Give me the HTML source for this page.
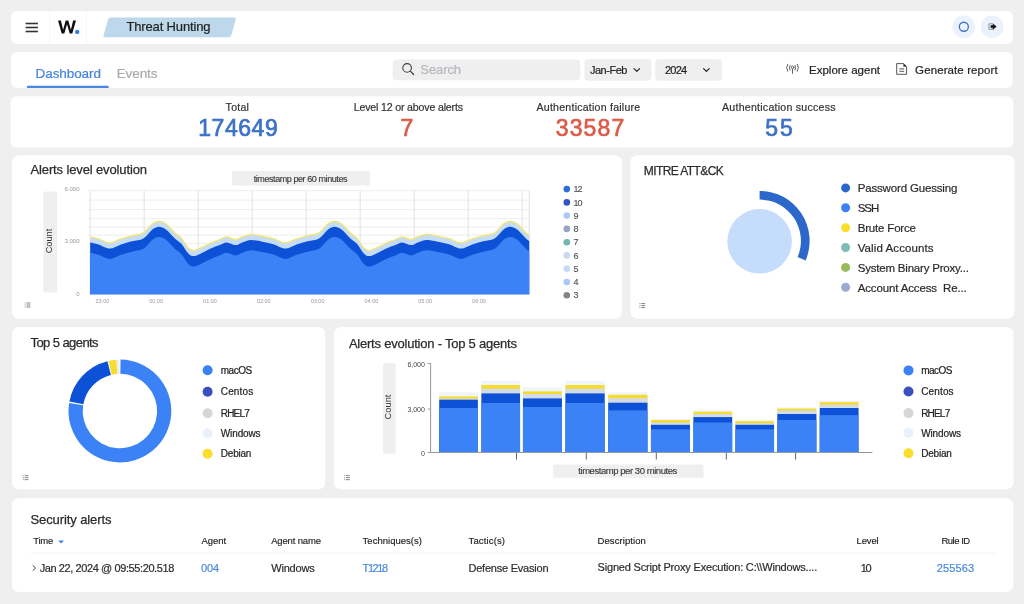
<!DOCTYPE html>
<html lang="en">
<head>
<meta charset="utf-8">
<title>Threat Hunting</title>
<style>
html,body{margin:0;padding:0;}
body{width:1024px;height:604px;overflow:hidden;position:relative;background:#efefef;font-family:"Liberation Sans",sans-serif;}
svg.bg{position:absolute;left:0;top:0;}
#txt{position:absolute;left:0;top:0;width:1024px;height:604px;will-change:transform;transform:translateZ(0);}
.t{position:absolute;white-space:pre;line-height:1;font-family:"Liberation Sans",sans-serif;}
</style>
</head>
<body>
<svg class="bg" width="1024" height="604" viewBox="0 0 1024 604">
<rect x="11" y="11" width="1002" height="33" rx="6" fill="#fff"/>
<rect x="11" y="52" width="1001.8" height="36" rx="6" fill="#fff"/>
<rect x="10.6" y="96.2" width="1002.8" height="51.2" rx="6" fill="#fff"/>
<rect x="12" y="155.2" width="609.8" height="163.5" rx="7" fill="#fff"/>
<rect x="630.3" y="155.2" width="384.2" height="163.5" rx="7" fill="#fff"/>
<rect x="12" y="327" width="313.3" height="162.3" rx="7" fill="#fff"/>
<rect x="334" y="327" width="679.5" height="162.3" rx="7" fill="#fff"/>
<rect x="12" y="498.3" width="1001.2" height="93.8" rx="7" fill="#fff"/>
<rect x="25.6" y="22.7" width="12.3" height="1.6" fill="#333"/>
<rect x="25.6" y="26.7" width="12.3" height="1.6" fill="#333"/>
<rect x="25.6" y="30.7" width="12.3" height="1.6" fill="#333"/>
<rect x="49.2" y="11" width="0.8" height="33" fill="#f4f4f4"/>
<rect x="86.2" y="11" width="0.8" height="33" fill="#f4f4f4"/>
<path transform="translate(58 20.6)" d="M0 0 H2.9 L5.1 9.2 L7.7 0 H10.3 L12.9 9.2 L15.1 0 H18 L14.3 12.9 H11.7 L9 3.6 L6.3 12.9 H3.7 Z" fill="#111"/>
<circle cx="77.2" cy="31.9" r="2.2" fill="#3a7cf0"/>
<path d="M110.3 17.5 H234.5 Q236.3 17.5 235.8 19.2 L231.2 35.6 Q230.7 37.2 229 37.2 H104.8 Q103 37.2 103.5 35.5 L108.2 19 Q108.7 17.5 110.3 17.5 Z" fill="#bcd8ea"/>
<circle cx="963.8" cy="26.7" r="11.3" fill="#ebf2fd"/>
<circle cx="963.85" cy="26.75" r="4.5" fill="none" stroke="#3b73c9" stroke-width="1.3"/>
<circle cx="992.1" cy="26.7" r="11.3" fill="#ebf2fd"/>
<path d="M993 23.8 H988.9 V29.3 H993.4" fill="none" stroke="#8a8a8a" stroke-width="0.9"/>
<path d="M990.9 25.5 H993.1 V23.9 L996.3 26.6 L993.1 29.3 V27.7 H990.9 Z" fill="#111" stroke="#111" stroke-width="0.5" stroke-linejoin="round"/>
<rect x="26.8" y="85.8" width="82" height="2.2" rx="1" fill="#4a86e4"/>
<rect x="392.6" y="59.4" width="187.6" height="20.8" rx="4" fill="#efefef"/>
<circle cx="407.1" cy="67.9" r="4.3" fill="none" stroke="#3c3c3c" stroke-width="1.1"/>
<path d="M410.3 71.1 L413.6 74.5" stroke="#3c3c3c" stroke-width="1.2" stroke-linecap="round"/>
<rect x="584.4" y="59.3" width="67" height="21.4" rx="4" fill="#efefef"/>
<rect x="655.2" y="59.3" width="66.8" height="21.4" rx="4" fill="#efefef"/>
<path d="M634 68.6 L636.8 71.4 L639.6 68.6" fill="none" stroke="#222" stroke-width="1.2" stroke-linecap="round" stroke-linejoin="round"/>
<path d="M703.6 68.6 L706.4 71.4 L709.2 68.6" fill="none" stroke="#222" stroke-width="1.2" stroke-linecap="round" stroke-linejoin="round"/>
<g fill="none" stroke="#5a5a5a" stroke-width="0.95" stroke-linecap="round"><circle cx="792.5" cy="67.4" r="1.35"/><path d="M792.5 69 V73.4"/><path d="M790 65.4 Q788.5 67.7 790 70.1"/><path d="M795 65.4 Q796.5 67.7 795 70.1"/><path d="M787.7 64.2 Q785.3 67.7 787.7 71.3"/><path d="M797.3 64.2 Q799.7 67.7 797.3 71.3"/></g>
<path d="M896.7 63.6 H903.6 L906.6 66.6 V74.3 H896.7 Z" fill="none" stroke="#444" stroke-width="0.9" stroke-linejoin="round"/>
<path d="M903.4 63.6 L906.6 66.8 H903.4 Z" fill="#333"/>
<path d="M899.3 68.9 H904.1 M899.3 71.3 H904.1" stroke="#444" stroke-width="0.9"/>
<rect x="232" y="171.1" width="138.2" height="14.3" rx="1.5" fill="#efefef"/>
<rect x="43.4" y="191.4" width="13.8" height="101.1" rx="1.5" fill="#efefef"/>
<path d="M88.4 190.70 H529.2 M88.4 200.10 H529.2 M88.4 209.60 H529.2 M88.4 218.70 H529.2 M88.4 226.90 H529.2 M88.4 235.10 H529.2 M88.4 243.60 H529.2 M88.4 252.10 H529.2 M88.4 260.60 H529.2" stroke="#e9e9e9" stroke-width="0.8" fill="none"/>
<path d="M90.20 190.7 V294.3 M144.20 190.7 V294.3 M198.20 190.7 V294.3 M252.20 190.7 V294.3 M306.20 190.7 V294.3 M360.20 190.7 V294.3 M414.20 190.7 V294.3 M468.20 190.7 V294.3 M522.20 190.7 V294.3 M529.20 190.7 V294.3" stroke="#dcdcdc" stroke-width="0.8" fill="none"/>
<path d="M90.2 236.9 C91.6 237.3 95.2 237.9 98.5 238.9 C101.8 239.9 106.0 243.0 109.7 243.0 C113.5 243.0 117.3 240.1 121.0 238.9 C124.7 237.7 128.3 236.8 132.0 235.8 C135.7 234.8 140.0 234.9 143.4 232.9 C146.8 230.9 149.8 225.8 152.4 223.9 C155.0 222.0 156.8 221.2 159.0 221.2 C161.2 221.2 163.3 222.0 165.9 223.9 C168.5 225.8 172.2 230.5 174.8 232.9 C177.4 235.3 179.3 236.0 181.6 238.5 C183.8 241.0 186.2 246.1 188.3 248.1 C190.4 250.1 191.8 250.7 194.0 250.6 C196.2 250.5 199.0 248.8 201.8 247.5 C204.6 246.2 207.8 244.3 210.8 243.0 C213.8 241.7 217.2 240.6 219.8 239.6 C222.4 238.6 223.9 236.9 226.5 236.9 C229.1 236.9 232.9 239.6 235.5 239.6 C238.1 239.6 239.6 237.8 242.2 236.9 C244.8 236.0 247.8 234.5 251.2 234.4 C254.6 234.3 260.0 235.8 262.4 236.2 C264.8 236.6 263.7 236.5 265.6 236.9 C267.6 237.3 270.8 237.9 274.1 238.9 C277.4 239.9 281.6 243.0 285.3 243.0 C289.1 243.0 292.9 240.1 296.6 238.9 C300.3 237.7 303.9 236.8 307.6 235.8 C311.3 234.8 315.6 234.9 319.0 232.9 C322.4 230.9 325.4 225.8 328.0 223.9 C330.6 222.0 332.4 221.2 334.6 221.2 C336.9 221.2 338.9 222.0 341.5 223.9 C344.1 225.8 347.8 230.5 350.4 232.9 C353.0 235.3 354.9 236.0 357.2 238.5 C359.4 241.0 361.8 246.1 363.9 248.1 C366.0 250.1 367.4 250.7 369.6 250.6 C371.9 250.5 374.6 248.8 377.4 247.5 C380.2 246.2 383.4 244.3 386.4 243.0 C389.4 241.7 392.8 240.6 395.4 239.6 C398.0 238.6 399.5 236.9 402.1 236.9 C404.7 236.9 408.5 239.6 411.1 239.6 C413.7 239.6 415.2 237.8 417.8 236.9 C420.4 236.0 423.4 234.5 426.8 234.4 C430.2 234.3 435.6 235.8 438.0 236.2 C440.4 236.6 439.2 236.5 441.2 236.9 C443.1 237.3 446.4 237.9 449.7 238.9 C453.0 239.9 457.1 243.0 460.9 243.0 C464.6 243.0 468.5 240.1 472.2 238.9 C475.9 237.7 479.5 236.8 483.2 235.8 C486.9 234.8 491.2 234.9 494.6 232.9 C498.0 230.9 501.0 225.8 503.6 223.9 C506.2 222.0 507.9 221.2 510.2 221.2 C512.5 221.2 514.5 222.0 517.1 223.9 C519.7 225.8 524.0 231.0 526.0 232.9 C528.0 234.8 528.7 235.1 529.2 235.5 L529.2 294.3 L90.2 294.3 Z" fill="#c5dcf8"/>
<path d="M90.2 242.4 C91.6 242.8 95.2 243.4 98.5 244.4 C101.8 245.4 106.0 248.5 109.7 248.5 C113.5 248.5 117.3 245.6 121.0 244.4 C124.7 243.2 128.3 242.3 132.0 241.3 C135.7 240.3 140.0 240.4 143.4 238.4 C146.8 236.4 149.8 231.3 152.4 229.4 C155.0 227.5 156.8 226.7 159.0 226.7 C161.2 226.7 163.3 227.5 165.9 229.4 C168.5 231.3 172.2 236.0 174.8 238.4 C177.4 240.8 179.3 241.5 181.6 244.0 C183.8 246.5 186.2 251.6 188.3 253.6 C190.4 255.6 191.8 256.2 194.0 256.1 C196.2 256.0 199.0 254.3 201.8 253.0 C204.6 251.7 207.8 249.8 210.8 248.5 C213.8 247.2 217.2 246.1 219.8 245.1 C222.4 244.1 223.9 242.4 226.5 242.4 C229.1 242.4 232.9 245.1 235.5 245.1 C238.1 245.1 239.6 243.3 242.2 242.4 C244.8 241.5 247.8 240.0 251.2 239.9 C254.6 239.8 260.0 241.3 262.4 241.7 C264.8 242.1 263.7 242.0 265.6 242.4 C267.6 242.8 270.8 243.4 274.1 244.4 C277.4 245.4 281.6 248.5 285.3 248.5 C289.1 248.5 292.9 245.6 296.6 244.4 C300.3 243.2 303.9 242.3 307.6 241.3 C311.3 240.3 315.6 240.4 319.0 238.4 C322.4 236.4 325.4 231.3 328.0 229.4 C330.6 227.5 332.4 226.7 334.6 226.7 C336.9 226.7 338.9 227.5 341.5 229.4 C344.1 231.3 347.8 236.0 350.4 238.4 C353.0 240.8 354.9 241.5 357.2 244.0 C359.4 246.5 361.8 251.6 363.9 253.6 C366.0 255.6 367.4 256.2 369.6 256.1 C371.9 256.0 374.6 254.3 377.4 253.0 C380.2 251.7 383.4 249.8 386.4 248.5 C389.4 247.2 392.8 246.1 395.4 245.1 C398.0 244.1 399.5 242.4 402.1 242.4 C404.7 242.4 408.5 245.1 411.1 245.1 C413.7 245.1 415.2 243.3 417.8 242.4 C420.4 241.5 423.4 240.0 426.8 239.9 C430.2 239.8 435.6 241.3 438.0 241.7 C440.4 242.1 439.2 242.0 441.2 242.4 C443.1 242.8 446.4 243.4 449.7 244.4 C453.0 245.4 457.1 248.5 460.9 248.5 C464.6 248.5 468.5 245.6 472.2 244.4 C475.9 243.2 479.5 242.3 483.2 241.3 C486.9 240.3 491.2 240.4 494.6 238.4 C498.0 236.4 501.0 231.3 503.6 229.4 C506.2 227.5 507.9 226.7 510.2 226.7 C512.5 226.7 514.5 227.5 517.1 229.4 C519.7 231.3 524.0 236.5 526.0 238.4 C528.0 240.3 528.7 240.6 529.2 241.0 L529.2 294.3 L90.2 294.3 Z" fill="#0d52d6"/>
<path d="M90.2 252.8 C91.6 253.2 95.2 253.8 98.5 254.8 C101.8 255.8 106.0 258.9 109.7 258.9 C113.5 258.9 117.3 256.0 121.0 254.8 C124.7 253.6 128.3 252.7 132.0 251.7 C135.7 250.7 140.0 250.8 143.4 248.8 C146.8 246.8 149.8 241.7 152.4 239.8 C155.0 237.8 156.8 237.1 159.0 237.1 C161.2 237.1 163.3 237.8 165.9 239.8 C168.5 241.7 172.2 246.4 174.8 248.8 C177.4 251.2 179.3 251.9 181.6 254.4 C183.8 256.9 186.2 262.0 188.3 264.0 C190.4 266.0 191.8 266.6 194.0 266.5 C196.2 266.4 199.0 264.7 201.8 263.4 C204.6 262.1 207.8 260.2 210.8 258.9 C213.8 257.6 217.2 256.5 219.8 255.5 C222.4 254.5 223.9 252.8 226.5 252.8 C229.1 252.8 232.9 255.5 235.5 255.5 C238.1 255.5 239.6 253.7 242.2 252.8 C244.8 251.9 247.8 250.4 251.2 250.3 C254.6 250.2 260.0 251.7 262.4 252.1 C264.8 252.5 263.7 252.3 265.6 252.8 C267.6 253.2 270.8 253.8 274.1 254.8 C277.4 255.8 281.6 258.9 285.3 258.9 C289.1 258.9 292.9 256.0 296.6 254.8 C300.3 253.6 303.9 252.7 307.6 251.7 C311.3 250.7 315.6 250.8 319.0 248.8 C322.4 246.8 325.4 241.7 328.0 239.8 C330.6 237.8 332.4 237.1 334.6 237.1 C336.9 237.1 338.9 237.8 341.5 239.8 C344.1 241.7 347.8 246.4 350.4 248.8 C353.0 251.2 354.9 251.9 357.2 254.4 C359.4 256.9 361.8 262.0 363.9 264.0 C366.0 266.0 367.4 266.6 369.6 266.5 C371.9 266.4 374.6 264.7 377.4 263.4 C380.2 262.1 383.4 260.2 386.4 258.9 C389.4 257.6 392.8 256.5 395.4 255.5 C398.0 254.5 399.5 252.8 402.1 252.8 C404.7 252.8 408.5 255.5 411.1 255.5 C413.7 255.5 415.2 253.7 417.8 252.8 C420.4 251.9 423.4 250.4 426.8 250.3 C430.2 250.2 435.6 251.7 438.0 252.1 C440.4 252.5 439.2 252.3 441.2 252.8 C443.1 253.2 446.4 253.8 449.7 254.8 C453.0 255.8 457.1 258.9 460.9 258.9 C464.6 258.9 468.5 256.0 472.2 254.8 C475.9 253.6 479.5 252.7 483.2 251.7 C486.9 250.7 491.2 250.8 494.6 248.8 C498.0 246.8 501.0 241.7 503.6 239.8 C506.2 237.8 507.9 237.1 510.2 237.1 C512.5 237.1 514.5 237.8 517.1 239.8 C519.7 241.7 524.0 246.9 526.0 248.8 C528.0 250.7 528.7 251.0 529.2 251.4 L529.2 294.3 L90.2 294.3 Z" fill="#3a82f6"/>
<path d="M90.2 236.9 C91.6 237.3 95.2 237.9 98.5 238.9 C101.8 239.9 106.0 243.0 109.7 243.0 C113.5 243.0 117.3 240.1 121.0 238.9 C124.7 237.7 128.3 236.8 132.0 235.8 C135.7 234.8 140.0 234.9 143.4 232.9 C146.8 230.9 149.8 225.8 152.4 223.9 C155.0 222.0 156.8 221.2 159.0 221.2 C161.2 221.2 163.3 222.0 165.9 223.9 C168.5 225.8 172.2 230.5 174.8 232.9 C177.4 235.3 179.3 236.0 181.6 238.5 C183.8 241.0 186.2 246.1 188.3 248.1 C190.4 250.1 191.8 250.7 194.0 250.6 C196.2 250.5 199.0 248.8 201.8 247.5 C204.6 246.2 207.8 244.3 210.8 243.0 C213.8 241.7 217.2 240.6 219.8 239.6 C222.4 238.6 223.9 236.9 226.5 236.9 C229.1 236.9 232.9 239.6 235.5 239.6 C238.1 239.6 239.6 237.8 242.2 236.9 C244.8 236.0 247.8 234.5 251.2 234.4 C254.6 234.3 260.0 235.8 262.4 236.2 C264.8 236.6 263.7 236.5 265.6 236.9 C267.6 237.3 270.8 237.9 274.1 238.9 C277.4 239.9 281.6 243.0 285.3 243.0 C289.1 243.0 292.9 240.1 296.6 238.9 C300.3 237.7 303.9 236.8 307.6 235.8 C311.3 234.8 315.6 234.9 319.0 232.9 C322.4 230.9 325.4 225.8 328.0 223.9 C330.6 222.0 332.4 221.2 334.6 221.2 C336.9 221.2 338.9 222.0 341.5 223.9 C344.1 225.8 347.8 230.5 350.4 232.9 C353.0 235.3 354.9 236.0 357.2 238.5 C359.4 241.0 361.8 246.1 363.9 248.1 C366.0 250.1 367.4 250.7 369.6 250.6 C371.9 250.5 374.6 248.8 377.4 247.5 C380.2 246.2 383.4 244.3 386.4 243.0 C389.4 241.7 392.8 240.6 395.4 239.6 C398.0 238.6 399.5 236.9 402.1 236.9 C404.7 236.9 408.5 239.6 411.1 239.6 C413.7 239.6 415.2 237.8 417.8 236.9 C420.4 236.0 423.4 234.5 426.8 234.4 C430.2 234.3 435.6 235.8 438.0 236.2 C440.4 236.6 439.2 236.5 441.2 236.9 C443.1 237.3 446.4 237.9 449.7 238.9 C453.0 239.9 457.1 243.0 460.9 243.0 C464.6 243.0 468.5 240.1 472.2 238.9 C475.9 237.7 479.5 236.8 483.2 235.8 C486.9 234.8 491.2 234.9 494.6 232.9 C498.0 230.9 501.0 225.8 503.6 223.9 C506.2 222.0 507.9 221.2 510.2 221.2 C512.5 221.2 514.5 222.0 517.1 223.9 C519.7 225.8 524.0 231.0 526.0 232.9 C528.0 234.8 528.7 235.1 529.2 235.5" fill="none" stroke="#f3e679" stroke-width="1.4"/>
<circle cx="566.8" cy="189.1" r="3.3" fill="#2b6fd6"/>
<circle cx="566.8" cy="202.4" r="3.3" fill="#3253c4"/>
<circle cx="566.8" cy="215.6" r="3.3" fill="#a9cbf7"/>
<circle cx="566.8" cy="228.9" r="3.3" fill="#98a5c4"/>
<circle cx="566.8" cy="242.2" r="3.3" fill="#72b5a9"/>
<circle cx="566.8" cy="255.4" r="3.3" fill="#ccd8ef"/>
<circle cx="566.8" cy="268.7" r="3.3" fill="#c5dafa"/>
<circle cx="566.8" cy="282.0" r="3.3" fill="#a8c8f5"/>
<circle cx="566.8" cy="295.3" r="3.3" fill="#868686"/>
<rect x="24.8" y="302.55" width="0.9" height="0.9" fill="#777"/><rect x="26.6" y="302.55" width="3.8" height="0.9" fill="#777"/><rect x="24.8" y="304.55" width="0.9" height="0.9" fill="#777"/><rect x="26.6" y="304.55" width="3.8" height="0.9" fill="#777"/><rect x="24.8" y="306.55" width="0.9" height="0.9" fill="#777"/><rect x="26.6" y="306.55" width="3.8" height="0.9" fill="#777"/>
<circle cx="759.6" cy="241.3" r="32.3" fill="#c5dcfb"/>
<path d="M759.60 190.90 A50.0 50.0 0 0 1 805.63 260.44 L797.62 257.04 A41.3 41.3 0 0 0 759.60 199.60 Z" fill="#2c68cc"/>
<circle cx="845.6" cy="187.9" r="4.5" fill="#2c68cc"/>
<circle cx="845.6" cy="207.8" r="4.5" fill="#3a82f6"/>
<circle cx="845.6" cy="227.7" r="4.5" fill="#fade2c"/>
<circle cx="845.6" cy="247.5" r="4.5" fill="#7dbdb3"/>
<circle cx="845.6" cy="267.4" r="4.5" fill="#98bc5c"/>
<circle cx="845.6" cy="287.3" r="4.5" fill="#9aaad0"/>
<rect x="639.5" y="303.15" width="0.9" height="0.9" fill="#777"/><rect x="641.3" y="303.15" width="3.8" height="0.9" fill="#777"/><rect x="639.5" y="305.15" width="0.9" height="0.9" fill="#777"/><rect x="641.3" y="305.15" width="3.8" height="0.9" fill="#777"/><rect x="639.5" y="307.15" width="0.9" height="0.9" fill="#777"/><rect x="641.3" y="307.15" width="3.8" height="0.9" fill="#777"/>
<path d="M120.53 359.60 A51.4 51.4 0 1 1 69.13 402.96 L83.16 405.18 A37.2 37.2 0 1 0 120.35 373.80 Z" fill="#3a82f6"/>
<path d="M69.38 401.54 A51.4 51.4 0 0 1 107.47 361.13 L110.90 374.90 A37.2 37.2 0 0 0 83.33 404.16 Z" fill="#0d52d6"/>
<path d="M108.51 360.88 A51.4 51.4 0 0 1 116.31 359.73 L117.31 373.89 A37.2 37.2 0 0 0 111.66 374.72 Z" fill="#f6dc2e"/>
<path d="M117.03 359.68 A51.4 51.4 0 0 1 118.29 359.63 L118.73 373.82 A37.2 37.2 0 0 0 117.82 373.86 Z" fill="#dcdcdc"/>
<path d="M118.55 359.62 A51.4 51.4 0 0 1 119.45 359.60 L119.58 373.80 A37.2 37.2 0 0 0 118.93 373.81 Z" fill="#e6eefb"/>
<circle cx="207.6" cy="370.2" r="5" fill="#3a82f6"/>
<circle cx="207.6" cy="391.8" r="5" fill="#3b4fc0"/>
<circle cx="207.6" cy="413.2" r="5" fill="#d6d6d6"/>
<circle cx="207.6" cy="433.3" r="5" fill="#ebf1fc"/>
<circle cx="207.6" cy="453.8" r="5" fill="#fade2c"/>
<rect x="22.8" y="475.25" width="0.9" height="0.9" fill="#777"/><rect x="24.6" y="475.25" width="3.8" height="0.9" fill="#777"/><rect x="22.8" y="477.25" width="0.9" height="0.9" fill="#777"/><rect x="24.6" y="477.25" width="3.8" height="0.9" fill="#777"/><rect x="22.8" y="479.25" width="0.9" height="0.9" fill="#777"/><rect x="24.6" y="479.25" width="3.8" height="0.9" fill="#777"/>
<rect x="383.1" y="363.2" width="12.6" height="90.6" rx="1.5" fill="#efefef"/>
<path d="M430.6 363.2 V452.5 H872.4" fill="none" stroke="#8a8a8a" stroke-width="0.9"/>
<path d="M427.6 363.6 H430.6 M427.6 409.1 H430.6 M427.6 452.5 H430.6" stroke="#8a8a8a" stroke-width="0.8"/>
<path d="M516.5 452.5 V459.6 M586.3 452.5 V459.6 M656.3 452.5 V459.6 M726.3 452.5 V459.6 M795.6 452.5 V459.6" stroke="#555" stroke-width="0.9"/>
<rect x="439.25" y="392.4" width="38.6" height="59.7" fill="#f0f4fd"/>
<rect x="439.25" y="396.4" width="38.6" height="55.7" fill="#f6dc2e"/>
<rect x="439.25" y="398.6" width="38.6" height="53.5" fill="#d3dbe6"/>
<rect x="439.25" y="399.7" width="38.6" height="52.4" fill="#0d52d6"/>
<rect x="439.25" y="408.0" width="38.6" height="44.1" fill="#3a82f6"/>
<rect x="481.45" y="380.8" width="38.6" height="71.3" fill="#f0f4fd"/>
<rect x="481.45" y="385.0" width="38.6" height="67.1" fill="#f6dc2e"/>
<rect x="481.45" y="388.7" width="38.6" height="63.4" fill="#d3dbe6"/>
<rect x="481.45" y="393.4" width="38.6" height="58.7" fill="#0d52d6"/>
<rect x="481.45" y="403.0" width="38.6" height="49.1" fill="#3a82f6"/>
<rect x="522.95" y="387.4" width="39.0" height="64.7" fill="#f0f4fd"/>
<rect x="522.95" y="391.4" width="39.0" height="60.7" fill="#f6dc2e"/>
<rect x="522.95" y="394.0" width="39.0" height="58.1" fill="#d3dbe6"/>
<rect x="522.95" y="398.4" width="39.0" height="53.7" fill="#0d52d6"/>
<rect x="522.95" y="407.0" width="39.0" height="45.1" fill="#3a82f6"/>
<rect x="565.45" y="380.8" width="39.2" height="71.3" fill="#f0f4fd"/>
<rect x="565.45" y="385.0" width="39.2" height="67.1" fill="#f6dc2e"/>
<rect x="565.45" y="388.7" width="39.2" height="63.4" fill="#d3dbe6"/>
<rect x="565.45" y="393.4" width="39.2" height="58.7" fill="#0d52d6"/>
<rect x="565.45" y="403.0" width="39.2" height="49.1" fill="#3a82f6"/>
<rect x="608.25" y="392.3" width="39.2" height="59.8" fill="#f0f4fd"/>
<rect x="608.25" y="394.8" width="39.2" height="57.3" fill="#f6dc2e"/>
<rect x="608.25" y="398.2" width="39.2" height="53.9" fill="#d3dbe6"/>
<rect x="608.25" y="402.7" width="39.2" height="49.4" fill="#0d52d6"/>
<rect x="608.25" y="410.4" width="39.2" height="41.7" fill="#3a82f6"/>
<rect x="650.95" y="418.8" width="39.0" height="33.3" fill="#f0f4fd"/>
<rect x="650.95" y="420.0" width="39.0" height="32.1" fill="#f6dc2e"/>
<rect x="650.95" y="422.5" width="39.0" height="29.6" fill="#d3dbe6"/>
<rect x="650.95" y="424.8" width="39.0" height="27.3" fill="#0d52d6"/>
<rect x="650.95" y="429.3" width="39.0" height="22.8" fill="#3a82f6"/>
<rect x="693.45" y="410.0" width="38.7" height="42.1" fill="#f0f4fd"/>
<rect x="693.45" y="411.7" width="38.7" height="40.4" fill="#f6dc2e"/>
<rect x="693.45" y="414.0" width="38.7" height="38.1" fill="#d3dbe6"/>
<rect x="693.45" y="417.1" width="38.7" height="35.0" fill="#0d52d6"/>
<rect x="693.45" y="422.5" width="38.7" height="29.6" fill="#3a82f6"/>
<rect x="735.45" y="420.2" width="38.6" height="31.9" fill="#f0f4fd"/>
<rect x="735.45" y="421.1" width="38.6" height="31.0" fill="#f6dc2e"/>
<rect x="735.45" y="423.3" width="38.6" height="28.8" fill="#d3dbe6"/>
<rect x="735.45" y="424.8" width="38.6" height="27.3" fill="#0d52d6"/>
<rect x="735.45" y="429.3" width="38.6" height="22.8" fill="#3a82f6"/>
<rect x="777.35" y="407.2" width="39.0" height="44.9" fill="#f0f4fd"/>
<rect x="777.35" y="408.6" width="39.0" height="43.5" fill="#f6dc2e"/>
<rect x="777.35" y="410.6" width="39.0" height="41.5" fill="#d3dbe6"/>
<rect x="777.35" y="414.0" width="39.0" height="38.1" fill="#0d52d6"/>
<rect x="777.35" y="420.0" width="39.0" height="32.1" fill="#3a82f6"/>
<rect x="819.75" y="400.4" width="38.7" height="51.7" fill="#f0f4fd"/>
<rect x="819.75" y="402.1" width="38.7" height="50.0" fill="#f6dc2e"/>
<rect x="819.75" y="404.7" width="38.7" height="47.4" fill="#d3dbe6"/>
<rect x="819.75" y="408.0" width="38.7" height="44.1" fill="#0d52d6"/>
<rect x="819.75" y="415.1" width="38.7" height="37.0" fill="#3a82f6"/>
<rect x="553.2" y="464.6" width="150.3" height="13.2" rx="1.5" fill="#efefef"/>
<circle cx="908.5" cy="370.4" r="5" fill="#3a82f6"/>
<circle cx="908.5" cy="391.5" r="5" fill="#3b4fc0"/>
<circle cx="908.5" cy="413.1" r="5" fill="#d6d6d6"/>
<circle cx="908.5" cy="432.9" r="5" fill="#ebf1fc"/>
<circle cx="908.5" cy="453.3" r="5" fill="#fade2c"/>
<rect x="344.2" y="475.25" width="0.9" height="0.9" fill="#777"/><rect x="346.0" y="475.25" width="3.8" height="0.9" fill="#777"/><rect x="344.2" y="477.25" width="0.9" height="0.9" fill="#777"/><rect x="346.0" y="477.25" width="3.8" height="0.9" fill="#777"/><rect x="344.2" y="479.25" width="0.9" height="0.9" fill="#777"/><rect x="346.0" y="479.25" width="3.8" height="0.9" fill="#777"/>
<path d="M58.3 540.6 H63.9 L61.1 543.6 Z" fill="#3a7ee8"/>
<rect x="30.5" y="552.7" width="965.5" height="0.8" fill="#f0f0f0"/>
<path d="M33 565.7 L35.6 568 L33 570.3" fill="none" stroke="#333" stroke-width="0.9" stroke-linecap="round" stroke-linejoin="round"/>
</svg>
<div id="txt">
<div class="t" style="left:126.50px;top:20px;font-size:13px;color:#222;letter-spacing:-0.153px;-webkit-text-stroke:0.2px #222;">Threat Hunting</div>
<div class="t" style="left:35.60px;top:67px;font-size:13.5px;color:#4683dd;letter-spacing:-0.093px;-webkit-text-stroke:0.2px #4683dd;">Dashboard</div>
<div class="t" style="left:116.70px;top:67px;font-size:13.5px;color:#aaaaaa;letter-spacing:-0.094px;-webkit-text-stroke:0.2px #aaaaaa;">Events</div>
<div class="t" style="left:420.30px;top:63px;font-size:13px;color:#b4b8be;letter-spacing:-0.078px;-webkit-text-stroke:0.2px #b4b8be;">Search</div>
<div class="t" style="left:589.90px;top:65px;font-size:11px;color:#222;letter-spacing:-0.476px;-webkit-text-stroke:0.2px #222;">Jan-Feb</div>
<div class="t" style="left:664.90px;top:65px;font-size:11px;color:#222;letter-spacing:-0.724px;-webkit-text-stroke:0.2px #222;">2024</div>
<div class="t" style="left:809.00px;top:65px;font-size:11.5px;color:#222;letter-spacing:0.003px;-webkit-text-stroke:0.2px #222;">Explore agent</div>
<div class="t" style="left:915.10px;top:65px;font-size:11.5px;color:#222;letter-spacing:0.101px;-webkit-text-stroke:0.2px #222;">Generate report</div>
<div class="t" style="left:225.60px;top:102px;font-size:10.6px;color:#333;letter-spacing:0.252px;-webkit-text-stroke:0.2px #333;">Total</div>
<div class="t" style="left:198.30px;top:117px;font-size:23px;color:#3b72c8;letter-spacing:0.530px;-webkit-text-stroke:0.7px #3b72c8;">174649</div>
<div class="t" style="left:353.75px;top:102px;font-size:10.6px;color:#333;letter-spacing:-0.167px;-webkit-text-stroke:0.2px #333;">Level 12 or above alerts</div>
<div class="t" style="left:400.60px;top:117px;font-size:23px;color:#dc5b49;-webkit-text-stroke:0.7px #dc5b49;">7</div>
<div class="t" style="left:536.55px;top:102px;font-size:10.6px;color:#333;letter-spacing:0.224px;-webkit-text-stroke:0.2px #333;">Authentication failure</div>
<div class="t" style="left:555.70px;top:117px;font-size:23px;color:#dc5b49;letter-spacing:1.161px;-webkit-text-stroke:0.7px #dc5b49;">33587</div>
<div class="t" style="left:722.00px;top:102px;font-size:10.6px;color:#333;letter-spacing:0.247px;-webkit-text-stroke:0.2px #333;">Authentication success</div>
<div class="t" style="left:765.30px;top:117px;font-size:23px;color:#3b72c8;letter-spacing:1.817px;-webkit-text-stroke:0.7px #3b72c8;">55</div>
<div class="t" style="left:30.50px;top:163px;font-size:13px;color:#2c2c2c;letter-spacing:-0.130px;-webkit-text-stroke:0.25px #2c2c2c;">Alerts level evolution</div>
<div class="t" style="left:253.70px;top:175px;font-size:9px;color:#3a3a3a;letter-spacing:-0.424px;-webkit-text-stroke:0.15px #3a3a3a;">timestamp per 60 minutes</div>
<div class="t" style="left:50.3px;top:240.8px;font-size:9.2px;color:#333;transform:translate(-50%,-50%) rotate(-90deg);">Count</div>
<div class="t" style="left:64.49px;top:186px;font-size:6px;color:#999;">6.000</div>
<div class="t" style="left:64.49px;top:238px;font-size:6px;color:#999;">3.000</div>
<div class="t" style="left:76.16px;top:291px;font-size:6px;color:#999;">0</div>
<div class="t" style="left:95.52px;top:299px;font-size:5.5px;color:#999;">23:00</div>
<div class="t" style="left:149.32px;top:299px;font-size:5.5px;color:#999;">00:00</div>
<div class="t" style="left:203.12px;top:299px;font-size:5.5px;color:#999;">01:00</div>
<div class="t" style="left:256.92px;top:299px;font-size:5.5px;color:#999;">02:00</div>
<div class="t" style="left:310.72px;top:299px;font-size:5.5px;color:#999;">03:00</div>
<div class="t" style="left:364.52px;top:299px;font-size:5.5px;color:#999;">04:00</div>
<div class="t" style="left:418.32px;top:299px;font-size:5.5px;color:#999;">05:00</div>
<div class="t" style="left:472.12px;top:299px;font-size:5.5px;color:#999;">06:00</div>
<div class="t" style="left:573.50px;top:185px;font-size:9px;color:#555;letter-spacing:-1.011px;-webkit-text-stroke:0.15px #555;">12</div>
<div class="t" style="left:573.50px;top:199px;font-size:9px;color:#555;letter-spacing:-1.011px;-webkit-text-stroke:0.15px #555;">10</div>
<div class="t" style="left:573.50px;top:212px;font-size:9px;color:#555;-webkit-text-stroke:0.15px #555;">9</div>
<div class="t" style="left:573.50px;top:225px;font-size:9px;color:#555;-webkit-text-stroke:0.15px #555;">8</div>
<div class="t" style="left:573.50px;top:238px;font-size:9px;color:#555;-webkit-text-stroke:0.15px #555;">7</div>
<div class="t" style="left:573.50px;top:252px;font-size:9px;color:#555;-webkit-text-stroke:0.15px #555;">6</div>
<div class="t" style="left:573.50px;top:265px;font-size:9px;color:#555;-webkit-text-stroke:0.15px #555;">5</div>
<div class="t" style="left:573.50px;top:278px;font-size:9px;color:#555;-webkit-text-stroke:0.15px #555;">4</div>
<div class="t" style="left:573.50px;top:291px;font-size:9px;color:#555;-webkit-text-stroke:0.15px #555;">3</div>
<div class="t" style="left:643.80px;top:165px;font-size:12px;color:#2c2c2c;letter-spacing:-0.586px;-webkit-text-stroke:0.25px #2c2c2c;">MITRE ATT&amp;CK</div>
<div class="t" style="left:857.70px;top:183px;font-size:11.5px;color:#2a2a2a;letter-spacing:-0.161px;-webkit-text-stroke:0.2px #2a2a2a;">Password Guessing</div>
<div class="t" style="left:857.70px;top:203px;font-size:11.5px;color:#2a2a2a;letter-spacing:-1.073px;-webkit-text-stroke:0.2px #2a2a2a;">SSH</div>
<div class="t" style="left:857.70px;top:223px;font-size:11.5px;color:#2a2a2a;letter-spacing:-0.178px;-webkit-text-stroke:0.2px #2a2a2a;">Brute Force</div>
<div class="t" style="left:857.70px;top:243px;font-size:11.5px;color:#2a2a2a;letter-spacing:0.094px;-webkit-text-stroke:0.2px #2a2a2a;">Valid Accounts</div>
<div class="t" style="left:857.70px;top:263px;font-size:11.5px;color:#2a2a2a;letter-spacing:-0.198px;-webkit-text-stroke:0.2px #2a2a2a;">System Binary Proxy...</div>
<div class="t" style="left:857.70px;top:283px;font-size:11.5px;color:#2a2a2a;letter-spacing:-0.138px;-webkit-text-stroke:0.2px #2a2a2a;">Account Access  Re...</div>
<div class="t" style="left:30.50px;top:336px;font-size:13px;color:#2c2c2c;letter-spacing:-0.577px;-webkit-text-stroke:0.25px #2c2c2c;">Top 5 agents</div>
<div class="t" style="left:220.80px;top:366px;font-size:10px;color:#222;letter-spacing:-0.510px;-webkit-text-stroke:0.2px #222;">macOS</div>
<div class="t" style="left:220.80px;top:387px;font-size:10px;color:#222;letter-spacing:0.143px;-webkit-text-stroke:0.2px #222;">Centos</div>
<div class="t" style="left:220.80px;top:409px;font-size:10px;color:#222;letter-spacing:-0.809px;-webkit-text-stroke:0.2px #222;">RHEL7</div>
<div class="t" style="left:220.80px;top:429px;font-size:10px;color:#222;letter-spacing:-0.128px;-webkit-text-stroke:0.2px #222;">Windows</div>
<div class="t" style="left:220.80px;top:449px;font-size:10px;color:#222;letter-spacing:-0.218px;-webkit-text-stroke:0.2px #222;">Debian</div>
<div class="t" style="left:348.90px;top:337px;font-size:13px;color:#2c2c2c;letter-spacing:-0.221px;-webkit-text-stroke:0.25px #2c2c2c;">Alerts evolution - Top 5 agents</div>
<div class="t" style="left:389.2px;top:407.3px;font-size:9.3px;color:#333;transform:translate(-50%,-50%) rotate(-90deg);">Count</div>
<div class="t" style="left:407.38px;top:361px;font-size:7px;color:#444;">6,000</div>
<div class="t" style="left:407.38px;top:406px;font-size:7px;color:#444;">3,000</div>
<div class="t" style="left:421.01px;top:450px;font-size:7px;color:#444;">0</div>
<div class="t" style="left:578.30px;top:466px;font-size:9.5px;color:#3a3a3a;letter-spacing:-0.448px;-webkit-text-stroke:0.15px #3a3a3a;">timestamp per 30 minutes</div>
<div class="t" style="left:921.20px;top:366px;font-size:10px;color:#222;letter-spacing:-0.510px;-webkit-text-stroke:0.2px #222;">macOS</div>
<div class="t" style="left:921.20px;top:387px;font-size:10px;color:#222;letter-spacing:0.143px;-webkit-text-stroke:0.2px #222;">Centos</div>
<div class="t" style="left:921.20px;top:409px;font-size:10px;color:#222;letter-spacing:-0.809px;-webkit-text-stroke:0.2px #222;">RHEL7</div>
<div class="t" style="left:921.20px;top:429px;font-size:10px;color:#222;letter-spacing:-0.128px;-webkit-text-stroke:0.2px #222;">Windows</div>
<div class="t" style="left:921.20px;top:449px;font-size:10px;color:#222;letter-spacing:-0.218px;-webkit-text-stroke:0.2px #222;">Debian</div>
<div class="t" style="left:30.50px;top:513px;font-size:13px;color:#2c2c2c;letter-spacing:-0.097px;-webkit-text-stroke:0.25px #2c2c2c;">Security alerts</div>
<div class="t" style="left:33.20px;top:536px;font-size:9.5px;color:#222;letter-spacing:-0.253px;-webkit-text-stroke:0.15px #222;">Time</div>
<div class="t" style="left:201.50px;top:536px;font-size:9.5px;color:#222;letter-spacing:-0.057px;-webkit-text-stroke:0.15px #222;">Agent</div>
<div class="t" style="left:271.20px;top:536px;font-size:9.5px;color:#222;letter-spacing:-0.159px;-webkit-text-stroke:0.15px #222;">Agent name</div>
<div class="t" style="left:362.60px;top:536px;font-size:9.5px;color:#222;letter-spacing:0.022px;-webkit-text-stroke:0.15px #222;">Techniques(s)</div>
<div class="t" style="left:468.50px;top:536px;font-size:9.5px;color:#222;letter-spacing:0.142px;-webkit-text-stroke:0.15px #222;">Tactic(s)</div>
<div class="t" style="left:597.60px;top:536px;font-size:9.5px;color:#222;letter-spacing:0.068px;-webkit-text-stroke:0.15px #222;">Description</div>
<div class="t" style="left:856.60px;top:536px;font-size:9.5px;color:#222;letter-spacing:-0.153px;-webkit-text-stroke:0.15px #222;">Level</div>
<div class="t" style="left:941.40px;top:536px;font-size:9.5px;color:#222;letter-spacing:-0.480px;-webkit-text-stroke:0.15px #222;">Rule ID</div>
<div class="t" style="left:39.70px;top:563px;font-size:11px;color:#2c2c2c;letter-spacing:-0.404px;-webkit-text-stroke:0.2px #2c2c2c;">Jan 22, 2024 @ 09:55:20.518</div>
<div class="t" style="left:200.90px;top:563px;font-size:11px;color:#4a8adc;letter-spacing:-0.027px;-webkit-text-stroke:0.2px #4a8adc;">004</div>
<div class="t" style="left:271.20px;top:563px;font-size:11px;color:#2c2c2c;letter-spacing:-0.187px;-webkit-text-stroke:0.2px #2c2c2c;">Windows</div>
<div class="t" style="left:362.60px;top:563px;font-size:11px;color:#4a8adc;letter-spacing:-1.423px;-webkit-text-stroke:0.2px #4a8adc;">T1218</div>
<div class="t" style="left:468.50px;top:563px;font-size:11px;color:#2c2c2c;letter-spacing:-0.226px;-webkit-text-stroke:0.2px #2c2c2c;">Defense Evasion</div>
<div class="t" style="left:597.60px;top:562px;font-size:11px;color:#2c2c2c;letter-spacing:-0.187px;-webkit-text-stroke:0.2px #2c2c2c;">Signed Script Proxy Execution: C:\\Windows....</div>
<div class="t" style="left:860.70px;top:563px;font-size:11px;color:#2c2c2c;letter-spacing:-1.235px;-webkit-text-stroke:0.2px #2c2c2c;">10</div>
<div class="t" style="left:936.80px;top:563px;font-size:11px;color:#4a8adc;letter-spacing:0.099px;-webkit-text-stroke:0.2px #4a8adc;">255563</div>
</div>
</body>
</html>
